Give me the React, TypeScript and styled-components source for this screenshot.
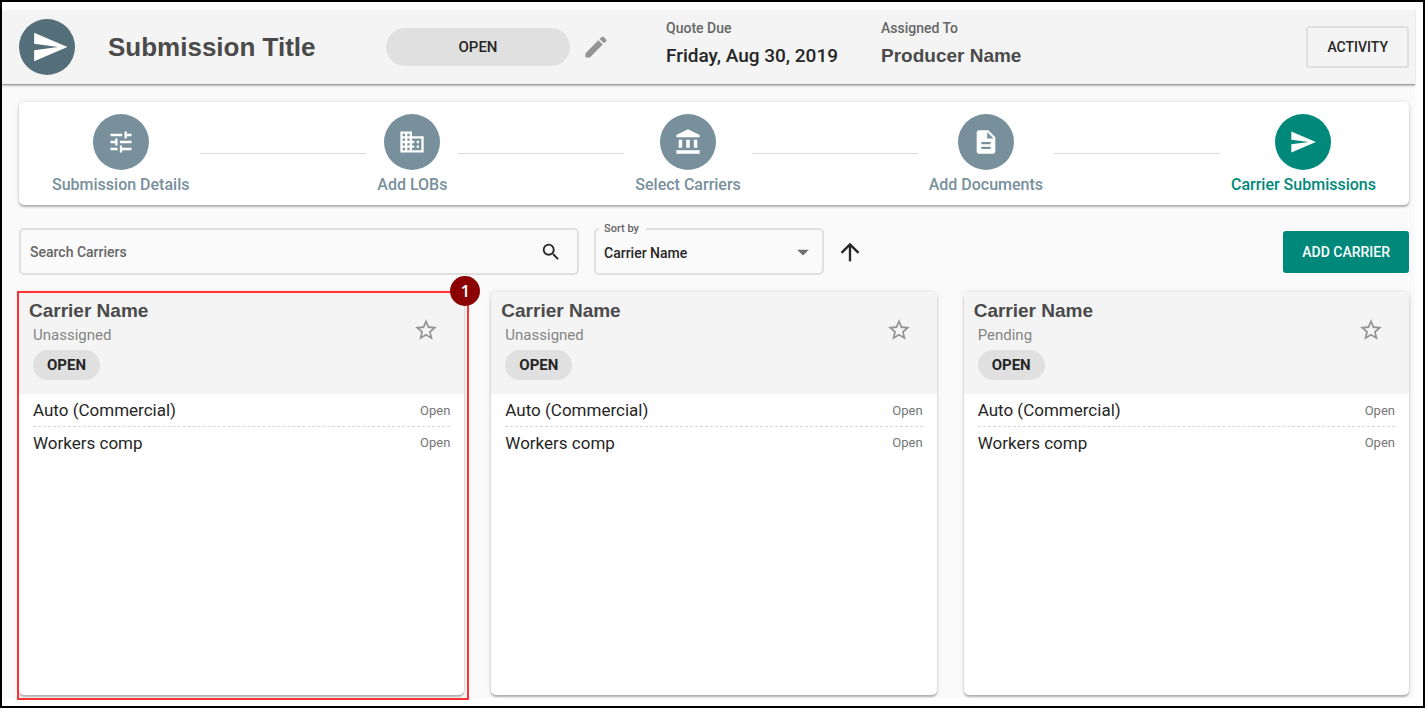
import React from "react";
import styled, { createGlobalStyle } from "styled-components";
import {
  MdAccountBalance,
  MdArrowDropDown,
  MdArrowUpward,
  MdDescription,
  MdDomain,
  MdEdit,
  MdSearch,
  MdSend,
  MdStarBorder,
  MdTune,
} from "react-icons/md";

const colors = {
  ink: "#262626",
  title: "#4a4a4a",
  muted: "#666",
  faint: "#858585",
  slate: "#78909c",
  logo: "#546e7a",
  teal: "#00897b",
  panel: "#f4f4f4",
  page: "#fafafa",
  outline: "#e0e0e0",
  chip: "#e0e0e0",
};

const heading = `"Liberation Sans", Arial, sans-serif`;

const GlobalStyle = createGlobalStyle`
  *, *::before, *::after { box-sizing: border-box; }
  body { margin: 0; font-family: Roboto, sans-serif; color: ${colors.ink}; }
  button, input, select { font: inherit; color: inherit; }
  h1, h2, p, ul, ol, dl, dd { margin: 0; padding: 0; }
  ul, ol { list-style: none; }
  svg { display: block; }
`;

const Frame = styled.div`
  display: flex;
  min-height: 100vh;
  padding: 8px 8px 8px 0;
  border: 2px solid #000;
  background: #fff;
`;

const Screen = styled.div`
  flex: 1;
  display: flex;
  flex-direction: column;
  background: ${colors.page};
`;

const Header = styled.header`
  display: flex;
  align-items: center;
  height: 75px;
  padding: 0 6px 0 17px;
  background: ${colors.panel};
  border-bottom: 1px solid #9a9a9a;
  box-shadow: 0 1px 2px rgba(0, 0, 0, 0.25);
`;

const Disc = styled.span<{ $color: string; $large?: boolean }>`
  display: flex;
  align-items: center;
  justify-content: center;
  width: 56px;
  height: 56px;
  padding-left: ${(p) => (p.$large ? 6 : 0)}px;
  border-radius: 50%;
  background: ${(p) => p.$color};
  color: #fff;
  font-size: ${(p) => (p.$large ? 38 : 28)}px;
`;

const PageTitle = styled.h1`
  width: 278px;
  margin-left: 33px;
  font: bold 26px/32px ${heading};
  color: ${colors.title};
`;

const Chip = styled.span<{ $wide?: boolean }>`
  display: inline-flex;
  align-items: center;
  justify-content: center;
  width: ${(p) => (p.$wide ? 184 : 67)}px;
  height: ${(p) => (p.$wide ? 38 : 30)}px;
  border-radius: 20px;
  background: ${colors.chip};
  font-size: 15px;
  font-weight: ${(p) => (p.$wide ? 500 : 700)};
`;

const IconButton = styled.button<{ $size: number; $color?: string }>`
  display: flex;
  padding: 0;
  border: 0;
  background: none;
  color: ${(p) => p.$color ?? colors.ink};
  font-size: ${(p) => p.$size}px;
  cursor: pointer;
`;

const EditSlot = styled.div`
  width: 84px;
  margin-left: 12px;
`;

const Facts = styled.dl`
  display: flex;
  padding-bottom: 7px;
`;

const Fact = styled.div`
  width: 215px;
`;

const FactLabel = styled.dt`
  font-size: 14px;
  line-height: 20px;
  font-weight: 500;
  color: ${colors.muted};
`;

const FactValue = styled.dd<{ $person?: boolean }>`
  margin-top: 4px;
  font-family: ${(p) => (p.$person ? heading : "inherit")};
  font-size: 19px;
  line-height: 28px;
  font-weight: ${(p) => (p.$person ? 700 : 500)};
  color: ${(p) => (p.$person ? colors.title : colors.ink)};
`;

const Button = styled.button<{ $primary?: boolean }>`
  height: 42px;
  margin-left: auto;
  padding: 0 19px;
  border: ${(p) => (p.$primary ? "0" : `2px solid ${colors.outline}`)};
  border-radius: 3px;
  background: ${(p) => (p.$primary ? colors.teal : "transparent")};
  color: ${(p) => (p.$primary ? "#fff" : colors.ink)};
  font-size: 14px;
  font-weight: 500;
  cursor: pointer;
`;

const Main = styled.main`
  flex: 1;
  display: flex;
  flex-direction: column;
  padding: 17px 6px 3px 17px;
`;

const raised = "0 2px 2px rgba(0, 0, 0, 0.26), 0 0 5px rgba(0, 0, 0, 0.12)";

const Stepper = styled.ol`
  display: flex;
  height: 103px;
  padding: 12px 32px 0;
  border-radius: 5px;
  background: #fff;
  box-shadow: ${raised};
`;

const Step = styled.li<{ $color: string }>`
  display: flex;
  flex-direction: column;
  align-items: center;
  gap: 5px;
  padding: 0 1px;
  color: ${(p) => p.$color};
  font-size: 16px;
  line-height: 20px;
  font-weight: 500;
`;

const Connector = styled.li`
  flex: 1;
  height: 1px;
  margin: 39px 10px 0;
  background: #dedede;
`;

const Toolbar = styled.div`
  display: flex;
  align-items: center;
  margin-top: 23px;
`;

const SearchBox = styled.label`
  display: flex;
  align-items: center;
  flex: 0 1 560px;
  height: 47px;
  padding: 0 15px 0 9px;
  border: 2px solid ${colors.outline};
  border-radius: 5px;
`;

const SearchInput = styled.input`
  flex: 1;
  min-width: 0;
  padding: 0;
  border: 0;
  outline: 0;
  background: none;
  font-size: 14px;
  font-weight: 500;
  &::placeholder { color: ${colors.muted}; opacity: 1; }
`;

const SortField = styled.div`
  position: relative;
  width: 230px;
  height: 47px;
  margin: 0 12px 0 15px;
`;

const SortLabel = styled.label`
  position: absolute;
  top: -6px;
  left: 5px;
  padding: 0 7px 0 5px;
  background: ${colors.page};
  color: ${colors.muted};
  font-size: 11px;
  line-height: 14px;
  font-weight: 500;
`;

const SortSelect = styled.select`
  width: 100%;
  height: 100%;
  padding: 2px 40px 0 8px;
  border: 2px solid ${colors.outline};
  border-radius: 5px;
  background: none;
  appearance: none;
  font-size: 14px;
  font-weight: 500;
`;

const SortArrow = styled(MdArrowDropDown)`
  position: absolute;
  top: 10px;
  right: 7px;
  color: #6f6f6f;
  pointer-events: none;
`;

const CardGrid = styled.ul`
  flex: 1;
  display: grid;
  grid-template-columns: repeat(3, 1fr);
  gap: 27px;
  margin-top: 17px;
`;

const Card = styled.li`
  position: relative;
  border-radius: 5px;
  background: #fff;
  box-shadow: ${raised};
`;

const CardHeader = styled.div`
  display: flex;
  justify-content: space-between;
  align-items: flex-start;
  height: 102px;
  padding: 7px 25px 0 10px;
  border-radius: 5px 5px 0 0;
  background: ${colors.panel};
`;

const CardTitle = styled.h2`
  font: bold 19px/24px ${heading};
  color: ${colors.title};
`;

const CardMeta = styled.div`
  padding-left: 4px;
`;

const Assignee = styled.p`
  margin: 2px 0 5px;
  font-size: 15px;
  line-height: 20px;
  color: ${colors.faint};
`;

const StarSlot = styled.div`
  padding-top: 18px;
`;

const Lines = styled.ul`
  padding: 0 14px;
`;

const Line = styled.li`
  display: flex;
  align-items: center;
  justify-content: space-between;
  height: 32px;
  font-size: 17px;
  & + & {
    border-top: 1px dashed #d6d6d6;
  }
`;

const LineStatus = styled.span`
  font-size: 13px;
  color: #757575;
`;

const Callout = styled.div`
  position: absolute;
  inset: -1px -5px -5px -2px;
  border: 2px solid #ff3333;
  pointer-events: none;
`;

const CalloutNumber = styled.span`
  position: absolute;
  top: -17px;
  right: -13px;
  width: 30px;
  height: 30px;
  border-radius: 50%;
  background: #8b0000;
  color: #fff;
  font: 600 17px/30px "Open Sans", sans-serif;
  text-align: center;
`;

const steps = [
  { label: "Submission Details", icon: <MdTune /> },
  { label: "Add LOBs", icon: <MdDomain /> },
  { label: "Select Carriers", icon: <MdAccountBalance /> },
  { label: "Add Documents", icon: <MdDescription /> },
  { label: "Carrier Submissions", icon: <MdSend />, active: true },
];

const carriers = [
  { id: 1, name: "Carrier Name", assignee: "Unassigned", status: "OPEN", callout: "1" },
  { id: 2, name: "Carrier Name", assignee: "Unassigned", status: "OPEN" },
  { id: 3, name: "Carrier Name", assignee: "Pending", status: "OPEN" },
];

const coverages = ["Auto (Commercial)", "Workers comp"];

export default function App() {
  return (
    <Frame>
      <GlobalStyle />
      <Screen>
        <Header>
          <Disc $color={colors.logo} $large>
            <MdSend />
          </Disc>
          <PageTitle>Submission Title</PageTitle>
          <Chip $wide>OPEN</Chip>
          <EditSlot>
            <IconButton $size={28} $color="#949494" aria-label="Edit status">
              <MdEdit />
            </IconButton>
          </EditSlot>
          <Facts>
            <Fact>
              <FactLabel>Quote Due</FactLabel>
              <FactValue>Friday, Aug 30, 2019</FactValue>
            </Fact>
            <Fact>
              <FactLabel>Assigned To</FactLabel>
              <FactValue $person>Producer Name</FactValue>
            </Fact>
          </Facts>
          <Button>ACTIVITY</Button>
        </Header>
        <Main>
          <Stepper>
            {steps.map((step, i) => {
              const color = step.active ? colors.teal : colors.slate;
              return (
                <React.Fragment key={step.label}>
                  {i > 0 && <Connector aria-hidden="true" />}
                  <Step $color={color} aria-current={step.active ? "step" : undefined}>
                    <Disc $color={color}>{step.icon}</Disc>
                    {step.label}
                  </Step>
                </React.Fragment>
              );
            })}
          </Stepper>
          <Toolbar>
            <SearchBox>
              <SearchInput type="text" placeholder="Search Carriers" aria-label="Search Carriers" />
              <MdSearch size={22} />
            </SearchBox>
            <SortField>
              <SortSelect id="sort">
                <option>Carrier Name</option>
              </SortSelect>
              <SortLabel htmlFor="sort">Sort by</SortLabel>
              <SortArrow size={28} />
            </SortField>
            <IconButton $size={28} aria-label="Sort ascending">
              <MdArrowUpward />
            </IconButton>
            <Button $primary>ADD CARRIER</Button>
          </Toolbar>
          <CardGrid>
            {carriers.map((carrier) => (
              <Card key={carrier.id}>
                <CardHeader>
                  <div>
                    <CardTitle>{carrier.name}</CardTitle>
                    <CardMeta>
                      <Assignee>{carrier.assignee}</Assignee>
                      <Chip>{carrier.status}</Chip>
                    </CardMeta>
                  </div>
                  <StarSlot>
                    <IconButton $size={26} $color="#949494" aria-label="Favorite">
                      <MdStarBorder />
                    </IconButton>
                  </StarSlot>
                </CardHeader>
                <Lines>
                  {coverages.map((name) => (
                    <Line key={name}>
                      {name}
                      <LineStatus>Open</LineStatus>
                    </Line>
                  ))}
                </Lines>
                {carrier.callout && (
                  <Callout>
                    <CalloutNumber>{carrier.callout}</CalloutNumber>
                  </Callout>
                )}
              </Card>
            ))}
          </CardGrid>
        </Main>
      </Screen>
    </Frame>
  );
}
